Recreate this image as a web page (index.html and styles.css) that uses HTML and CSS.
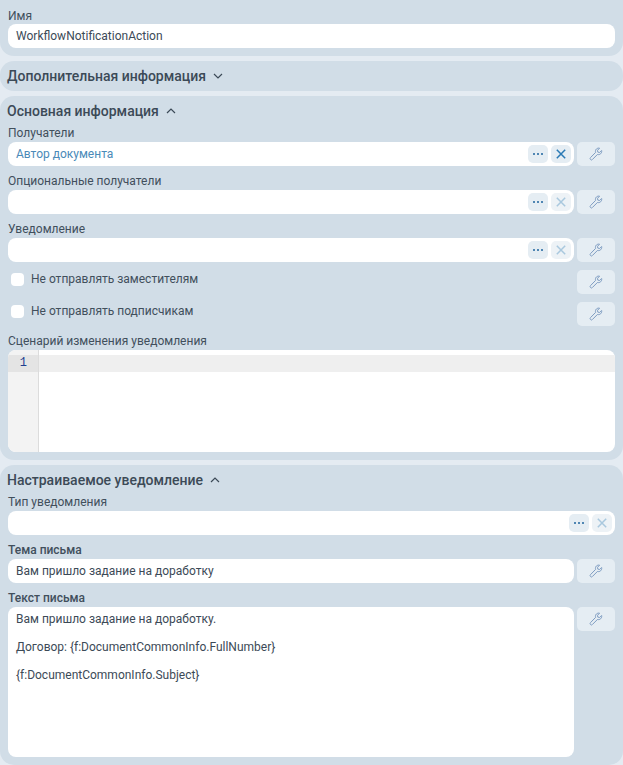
FILE: index.html
```html
<!DOCTYPE html>
<html lang="ru">
<head>
<meta charset="utf-8">
<title>WorkflowNotificationAction</title>
<link rel="stylesheet" href="styles.css">
</head>
<body>
<svg class="defs" width="0" height="0" aria-hidden="true">
  <symbol id="wrench" viewBox="0 0 14 14">
    <path d="M1.6 12.6c-.7-.6-.7-1.400-.1-2l5.100-5.200c-.4-1.300-.1-2.500.8-3.400.9-.8 2.100-1.100 3.200-.8L8.500 3.300l.3 1.800 1.800.4 2-2c.3 1.200 0 2.400-.9 3.200-.9.9-2.100 1.100-3.300.8l-5 5c-.7.7-1.300.7-1.800.1z" fill="none" stroke="#7f9dc2" stroke-width="1"/>
  </symbol>
  <symbol id="cross" viewBox="0 0 10 10">
    <path d="M.8.8l8.400 8.400M9.200.8L.8 9.200" fill="none" stroke="currentColor" stroke-width="1.500"/>
  </symbol>
  <symbol id="dots" viewBox="0 0 10 2">
    <rect x="0" width="2" height="2"/><rect x="4" width="2" height="2"/><rect x="8" width="2" height="2"/>
  </symbol>
</svg>

<section class="panel panel-name">
  <div class="label">Имя</div>
  <div class="input"><span class="value">WorkflowNotificationAction</span></div>
</section>

<section class="panel panel-collapsed">
  <h2 class="heading">Дополнительная информация
    <svg class="chev" viewBox="0 0 10 6"><path d="M1 1l4 4 4-4"/></svg>
  </h2>
</section>

<section class="panel panel-main">
  <h2 class="heading">Основная информация
    <svg class="chev" viewBox="0 0 10 6"><path d="M1 5l4-4 4 4"/></svg>
  </h2>

  <div class="label">Получатели</div>
  <div class="row">
    <div class="input">
      <span class="value link">Автор документа</span>
      <button class="mini dots"><svg><use href="#dots"/></svg></button>
      <button class="mini clear active"><svg><use href="#cross"/></svg></button>
    </div>
    <button class="tool"><svg><use href="#wrench"/></svg></button>
  </div>

  <div class="label">Опциональные получатели</div>
  <div class="row">
    <div class="input">
      <span class="value"></span>
      <button class="mini dots"><svg><use href="#dots"/></svg></button>
      <button class="mini clear"><svg><use href="#cross"/></svg></button>
    </div>
    <button class="tool"><svg><use href="#wrench"/></svg></button>
  </div>

  <div class="label">Уведомление</div>
  <div class="row">
    <div class="input">
      <span class="value"></span>
      <button class="mini dots"><svg><use href="#dots"/></svg></button>
      <button class="mini clear"><svg><use href="#cross"/></svg></button>
    </div>
    <button class="tool"><svg><use href="#wrench"/></svg></button>
  </div>

  <div class="row check-row">
    <label class="check"><span class="box"></span>Не отправлять заместителям</label>
    <button class="tool"><svg><use href="#wrench"/></svg></button>
  </div>
  <div class="row check-row">
    <label class="check"><span class="box"></span>Не отправлять подписчикам</label>
    <button class="tool"><svg><use href="#wrench"/></svg></button>
  </div>

  <div class="label label-script">Сценарий изменения уведомления</div>
  <div class="editor">
    <div class="gutter"><div class="line-no">1</div></div>
    <div class="code"><div class="active-line"></div></div>
  </div>
</section>

<section class="panel panel-custom">
  <h2 class="heading">Настраиваемое уведомление
    <svg class="chev" viewBox="0 0 10 6"><path d="M1 5l4-4 4 4"/></svg>
  </h2>

  <div class="label">Тип уведомления</div>
  <div class="input">
    <span class="value"></span>
    <button class="mini dots"><svg><use href="#dots"/></svg></button>
    <button class="mini clear"><svg><use href="#cross"/></svg></button>
  </div>

  <div class="label strong">Тема письма</div>
  <div class="row">
    <div class="input"><span class="value">Вам пришло задание на доработку</span></div>
    <button class="tool"><svg><use href="#wrench"/></svg></button>
  </div>

  <div class="label strong">Текст письма</div>
  <div class="row row-top">
    <div class="textarea">
      <p>Вам пришло задание на доработку.</p>
      <p>Договор: {f:DocumentCommonInfo.FullNumber}</p>
      <p>{f:DocumentCommonInfo.Subject}</p>
    </div>
    <button class="tool"><svg><use href="#wrench"/></svg></button>
  </div>
</section>
</body>
</html>
```
FILE: styles.css
```css
* { box-sizing: border-box; }
html, body { margin: 0; padding: 0; }
body {
  width: 623px;
  height: 765px;
  overflow: hidden;
  background: #e4ebf2;
  font-family: Roboto, sans-serif;
  font-size: 12px;
  color: #3c4a57;
  display: flex;
  flex-direction: column;
  gap: 5px;
}
.defs { position: absolute; }
.panel {
  background: #d1dde7;
  border-radius: 14px;
  padding: 0 8px;
}
.panel-name { height: 56px; padding-top: 8px; border-radius: 0 0 14px 14px; }
.panel-collapsed { height: 30px; padding: 6px 8px 0; }
.panel-main { height: 364px; padding-top: 6px; }
.panel-custom { height: 300px; padding-top: 6px; }
.heading {
  margin: 0 0 0 -1px;
  height: 18px;
  line-height: 18px;
  font-size: 14px;
  font-weight: 500;
  color: #3c4a57;
  display: flex;
  align-items: center;
  gap: 7px;
}
.chev { width: 10px; height: 6px; fill: none; stroke: #3c4a57; stroke-width: 1.200; }
.label {
  height: 16px;
  line-height: 16px;
  margin: 7px 0 1px;
  color: #414f5c;
}
.panel-name .label { margin: 0; }
.heading + .label { margin-top: 5px; }
.strong { font-weight: 500; }
.row { display: flex; gap: 3px; }
.row-top { align-items: flex-start; }
.input {
  flex: 1;
  height: 24px;
  background: #fff;
  border-radius: 8px;
  display: flex;
  align-items: center;
  padding: 0 3px 0 8px;
  gap: 3px;
  min-width: 0;
}
.value { flex: 1; color: #3c4a57; white-space: nowrap; }
.link { color: #4a8ab8; }
.mini {
  width: 20px;
  height: 18px;
  padding: 0;
  border: 0;
  border-radius: 5px;
  background: #e5edf3;
  display: flex;
  align-items: center;
  justify-content: center;
}
.mini.clear { background: #edf2f6; color: #a9c8de; }
.mini.clear.active { background: #e5edf3; color: #2a7ab5; }
.dots svg { width: 10px; height: 2px; fill: #4f86b3; }
.clear svg { width: 10px; height: 10px; }
.tool {
  width: 38px;
  height: 24px;
  padding: 0;
  border: 0;
  border-radius: 5px;
  background: #e5edf3;
  display: flex;
  align-items: center;
  justify-content: center;
  flex: none;
}
.tool svg { width: 14px; height: 14px; }
.check-row { margin-top: 8px; justify-content: space-between; }
.check {
  height: 18px;
  display: flex;
  align-items: center;
  gap: 7px;
  padding-left: 3px;
  color: #414f5c;
}
.box { width: 13px; height: 13px; background: #fff; border-radius: 4px; }
.editor {
  height: 102px;
  background: #fff;
  border-radius: 8px;
  overflow: hidden;
  display: flex;
}
.gutter {
  width: 31px;
  background: #f3f3f3;
  border-right: 1px solid #dcdcdc;
  padding-top: 5px;
}
.line-no {
  height: 17px;
  line-height: 17px;
  background: #e4e4e4;
  text-align: right;
  padding-right: 11px;
  font-family: "Liberation Mono", monospace;
  font-size: 12px;
  color: #1f3f8f;
}
.code { flex: 1; padding-top: 5px; }
.active-line { height: 17px; background: #efefef; }
.textarea {
  flex: 1;
  height: 150px;
  background: #fff;
  border-radius: 8px;
  padding: 5px 8px;
  color: #3c4a57;
  line-height: 14px;
}
.textarea p { margin: 0 0 14px; }
```
